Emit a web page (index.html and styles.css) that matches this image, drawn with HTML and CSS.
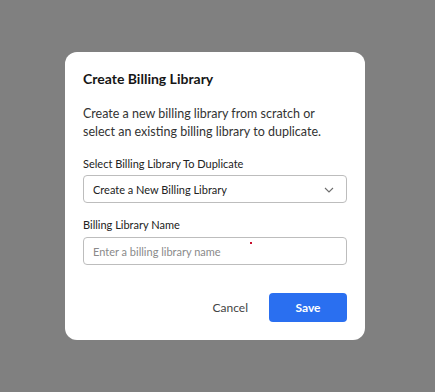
FILE: index.html
```html
<!DOCTYPE html>
<html lang="en">
  <head>
    <meta charset="utf-8" />
    <meta name="viewport" content="width=device-width, initial-scale=1.0" />
    <title>Create Billing Library</title>
    <link rel="stylesheet" href="styles.css">
  </head>
  <body>
    <div class="overlay">
      <div class="modal">
        <h2 class="modal-title">Create Billing Library</h2>
        <p class="modal-text">
          Create a new billing library from scratch or<br />
          select an existing billing library to duplicate.
        </p>

        <label class="field-label">Select Billing Library To Duplicate</label>
        <div class="select">
          <span>Create a New Billing Library</span>
          <svg class="chevron" width="10" height="6" viewBox="0 0 10 6">
            <path d="M1 1l4 4l4-4" fill="none" stroke="#6e6e6e" stroke-width="1.1" />
          </svg>
        </div>

        <label class="field-label second">Billing Library Name</label>
        <div class="input-wrap">
          <input type="text" placeholder="Enter a billing library name" />
          <span class="dot"></span>
        </div>

        <div class="actions">
          <button class="cancel-button">Cancel</button>
          <button class="save-button">Save</button>
        </div>
      </div>
    </div>
  </body>
</html>
```

FILE: styles.css
```css
* {
  padding: 0;
  margin: 0;
  box-sizing: border-box;
  font-family: Lato, "Noto Sans", sans-serif;
}
body {
  height: 100vh;
  background-color: #808080;
}
.overlay {
  padding: 52px 0 0 65px;
}
.modal {
  width: 300px;
  height: 288px;
  background-color: #ffffff;
  border-radius: 12px;
  padding: 18px 18px 18px 18px;
}
.modal-title {
  font-size: 14px;
  line-height: 18px;
  font-weight: 700;
  color: #161616;
}
.modal-text {
  margin-top: 17px;
  font-size: 12.5px;
  line-height: 18px;
  color: #333333;
}
.field-label {
  display: block;
  margin-top: 16px;
  font-size: 11px;
  line-height: 14px;
  color: #222222;
}
.field-label.second {
  margin-top: 15px;
}
.select {
  margin-top: 4px;
  height: 28px;
  border: 1px solid #bdbdbd;
  border-radius: 4px;
  display: flex;
  align-items: center;
  justify-content: space-between;
  padding: 0 12px 0 9px;
  font-size: 11px;
  color: #222222;
}
.chevron {
  margin-top: 1px;
}
.input-wrap {
  position: relative;
  margin-top: 5px;
}
.input-wrap input {
  width: 100%;
  height: 28px;
  border: 1px solid #bdbdbd;
  border-radius: 4px;
  padding: 0 9px;
  font-size: 11px;
  color: #222222;
  outline: none;
}
.input-wrap input::placeholder {
  color: #8a8a8a;
}
.dot {
  position: absolute;
  left: 167px;
  top: 5px;
  width: 2px;
  height: 2px;
  background-color: #c8102e;
}
.actions {
  margin-top: 28px;
  display: flex;
  justify-content: flex-end;
  align-items: center;
  gap: 21px;
}
button {
  border: none;
  cursor: pointer;
  font-size: 12px;
}
.cancel-button {
  background: none;
  color: #444444;
}
.save-button {
  width: 78px;
  height: 29px;
  border-radius: 4px;
  background-color: #2a6ff0;
  color: #ffffff;
  font-weight: 700;
}
```
